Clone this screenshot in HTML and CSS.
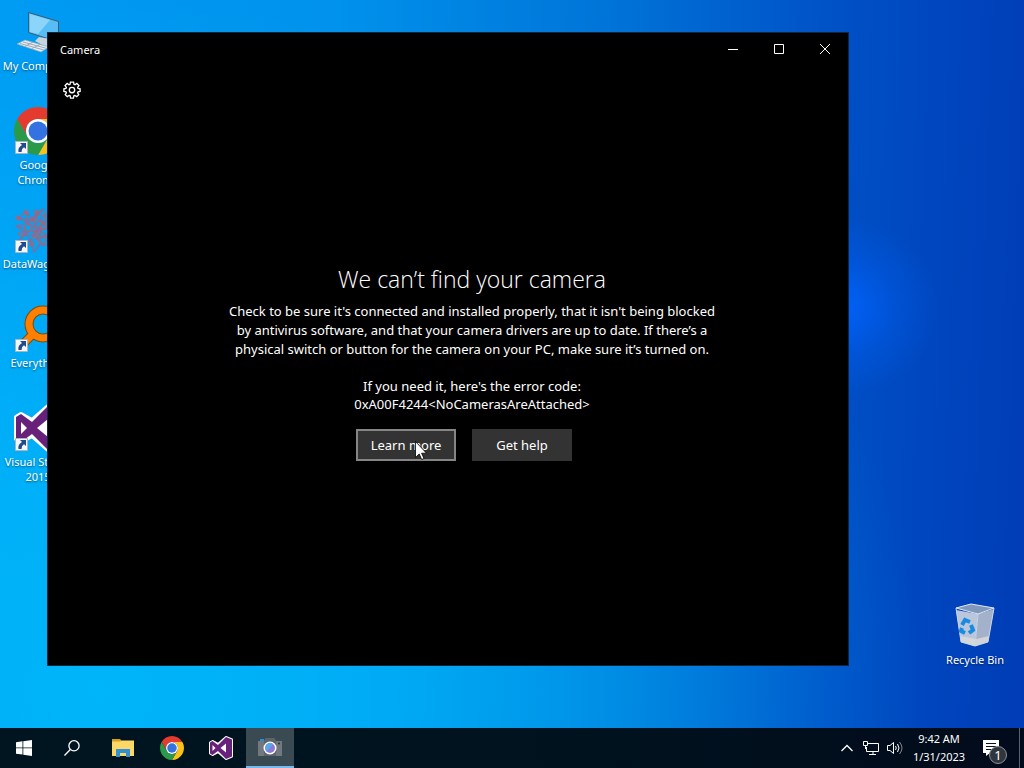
FILE: index.html
```
<!DOCTYPE html>
<html lang="en">
<head>
    <meta charset="utf-8">
    <title>Desktop</title>
    <link rel="stylesheet" href="styles.css">
</head>
<body>
    <!-- shared icons -->
    <svg class="sprites" aria-hidden="true">
        <symbol id="chrome" viewBox="0 0 48 48">
            <path fill="#e53b2e" d="M24 12H44.78A24 24 0 0 0 3.22 12L13.61 30A12 12 0 0 1 24 12Z"/>
            <path fill="#fbc116" d="M34.39 30L24 48A24 24 0 0 0 44.78 12H24A12 12 0 0 1 34.39 30Z"/>
            <path fill="#2b9a48" d="M13.61 30L3.22 12A24 24 0 0 0 24 48L34.39 30A12 12 0 0 1 13.61 30Z"/>
            <circle cx="24" cy="24" r="12" fill="#fff"/>
            <circle cx="24" cy="24" r="9.5" fill="#3372e0"/>
        </symbol>
        <symbol id="vs" viewBox="0 0 48 48">
            <path fill="#fff" stroke="#fff" stroke-width="4" stroke-linejoin="round" d="M34 2L46 7V41L34 46L18 32L7 38L2 35V13L7 10L18 16Z"/>
            <path fill="#68217a" fill-rule="evenodd" d="M34 2L46 7V41L34 46L18 30L7 38L2 35V13L7 10L18 18ZM34 15L23 24L34 33ZM7 18V30L13 24Z"/>
        </symbol>
        <symbol id="shortcut" viewBox="0 0 13 13">
            <path fill="#f4f6fa" stroke="#a9b4c4" d="M.5.5h12v12H.5z"/>
            <path fill="#234a8c" d="M5 2h6v6L9 6.300Q6.500 7.500 6.500 11H3.500Q2.500 6.500 7 4Z"/>
        </symbol>
    </svg>

    <main class="desktop">
        <div class="shortcuts">
            <a class="shortcut" href="#">
                <span class="picture">
                    <svg viewBox="0 0 48 48">
                        <path fill="#58bdf5" stroke="#405a70" d="M14.500 4.500L44.500 13.500V34L14.500 24.500Z"/>
                        <path fill="#8bd5fb" d="M16 6L36 12L24 26L16 24Z"/>
                        <path fill="#c8d3dc" d="M25 29L36 31L40 36L32 39L21 33Z"/>
                        <path fill="#e8edf2" stroke="#8fa6b8" stroke-width=".7" d="M3 36L11 32L35 39L27 44Z"/>
                        <path stroke="#9aaab8" fill="none" d="M6 35.500L30 42M9 34L33 40.500M11 38.500L19 34M18 40.500L26 36.500"/>
                    </svg>
                </span>
                <span>My Computer</span>
            </a>
            <a class="shortcut" href="#">
                <span class="picture">
                    <svg><use href="#chrome"/></svg>
                    <svg class="arrow"><use href="#shortcut"/></svg>
                </span>
                <span>Google<br>Chrome</span>
            </a>
            <a class="shortcut" href="#">
                <span class="picture">
                    <svg viewBox="0 0 48 48" fill="none" stroke="#8a6a96" stroke-width="1.200">
                        <path d="M4 12L12 6L19 14L29 3L34 13L43 12L37 22L46 26L34 30L38 42L27 37L20 46L16 35L4 36L12 27L2 20L14 17Z"/>
                        <path d="M12 6L14 17L22 8L29 3M4 12L19 14L24 24L12 27L4 36M2 20L10 22L16 35L24 24L34 13M20 46L27 37L24 24L37 22M14 17L34 30L16 35M10 12L19 21L30 9M8 30L21 29L30 40M27 14L38 27L25 31"/>
                        <g stroke="#b5606c">
                            <circle cx="12" cy="6" r="2"/><circle cx="4" cy="12" r="2"/><circle cx="19" cy="14" r="2"/>
                            <circle cx="14" cy="22" r="3"/><circle cx="21" cy="29" r="2"/><circle cx="29" cy="20" r="3"/>
                            <circle cx="7" cy="28" r="2"/><circle cx="22" cy="6" r="2"/><circle cx="18" cy="38" r="2"/>
                            <circle cx="27" cy="12" r="4"/><circle cx="24" cy="24" r="4"/><circle cx="28" cy="34" r="4"/>
                        </g>
                    </svg>
                    <svg class="arrow"><use href="#shortcut"/></svg>
                </span>
                <span>DataWagon-1</span>
            </a>
            <a class="shortcut" href="#">
                <span class="picture">
                    <svg viewBox="0 0 48 48" fill="none">
                        <circle cx="29" cy="19" r="14" stroke="#7a4a12" stroke-width="9"/>
                        <path stroke="#7a4a12" stroke-width="9" d="M19 29L5 43"/>
                        <circle cx="29" cy="19" r="14" stroke="#ff8000" stroke-width="7"/>
                        <path stroke="#ff8000" stroke-width="7" d="M19 29L6 42"/>
                    </svg>
                    <svg class="arrow"><use href="#shortcut"/></svg>
                </span>
                <span>Everything</span>
            </a>
            <a class="shortcut" href="#">
                <span class="picture">
                    <svg><use href="#vs"/></svg>
                    <svg class="arrow"><use href="#shortcut"/></svg>
                </span>
                <span>Visual Studio<br>2015</span>
            </a>
        </div>

        <a class="shortcut bin" href="#">
            <span class="picture">
                <svg viewBox="0 0 48 48">
                    <path fill="#b9c6dc" d="M5 8L27 12L24 44L10 40Z"/>
                    <path fill="#a3b1ca" d="M27 12L43 7L37 40L24 44Z"/>
                    <path fill="#8198bd" stroke="#e1e8f2" d="M5 6L20 2L43 6L27 12Z"/>
                    <path fill="#dcdcd9" d="M9 34L25 37L24 44L10 40ZM25 37L38 34L37 40L24 44Z" opacity=".8"/>
                    <path fill="none" stroke="#ccd6e6" d="M5 6L10 40L24 44L37 40L43 6M27 12L24 44"/>
                    <path fill="none" stroke="#188be0" stroke-width="4" d="M11 23L14 18L19 20M20 23L22 28L18 31M14 31L10 29L11 26"/>
                </svg>
            </span>
            <span>Recycle Bin</span>
        </a>

        <section class="window" aria-labelledby="title">
            <header class="titlebar">
                <span id="title">Camera</span>
                <div class="window-buttons">
                    <button type="button" aria-label="Minimize"><svg viewBox="0 0 10 10"><path d="M0 5.500H10"/></svg></button>
                    <button type="button" aria-label="Maximize"><svg viewBox="0 0 10 10"><path d="M.5.5h9v9h-9z"/></svg></button>
                    <button type="button" aria-label="Close"><svg viewBox="0 0 10 10"><path d="M0 0L10 10M10 0L0 10"/></svg></button>
                </div>
            </header>
            <div class="camera">
                <button type="button" class="settings" aria-label="Settings">
                    <svg viewBox="0 0 20 20">
                        <path d="M8.300 1.200H11.700L12.200 3.600L13.300 4.100L15.400 2.700L17.700 5L16.300 7.100L16.700 8.200L19 8.600V11.600L16.700 12L16.200 13.100L17.500 15.200L15.300 17.400L13.200 16.100L12.100 16.500L11.600 19H8.400L7.900 16.500L6.800 16.100L4.700 17.400L2.500 15.200L3.800 13.100L3.300 12L1 11.600V8.600L3.300 8.200L3.700 7.100L2.300 5L4.600 2.700L6.700 4.100L7.800 3.600Z"/>
                        <circle cx="10" cy="10" r="3"/>
                    </svg>
                </button>
                <div class="message">
                    <h1>We can’t find your camera</h1>
                    <p>Check to be sure it's connected and installed properly, that it isn't being blocked<br>
                    by antivirus software, and that your camera drivers are up to date. If there’s a<br>
                    physical switch or button for the camera on your PC, make sure it’s turned on.</p>
                    <p class="error">If you need it, here's the error code:<br>
                    0xA00F4244&lt;NoCamerasAreAttached&gt;</p>
                    <div class="actions">
                        <button type="button" class="active">Learn more</button>
                        <button type="button">Get help</button>
                    </div>
                </div>
            </div>
        </section>

        <svg class="cursor" viewBox="0 0 12 19">
            <path fill="#fff" stroke="#000" stroke-width=".8" d="M.5.500V16.500L4.200 13L6.700 18.500L9 17.500L6.600 12.200H11.500Z"/>
        </svg>
    </main>

    <footer class="taskbar">
        <button type="button" class="task" aria-label="Start">
            <svg class="small" viewBox="0 0 16 16"><path fill="#fff" d="M0 2.200L6.500 1.300V7.500H0ZM7.300 1.200L16 0V7.500H7.300ZM0 8.300H6.500V14.600L0 13.700ZM7.300 8.300H16V16L7.300 14.800Z"/></svg>
        </button>
        <button type="button" class="task" aria-label="Search">
            <svg class="small" viewBox="0 0 16 16" fill="none" stroke="#fff" stroke-width="1.300"><circle cx="10" cy="5.800" r="5.100"/><path d="M6.300 9.500L.5 15.500"/></svg>
        </button>
        <nav class="apps" aria-label="Apps">
            <button type="button" class="task" aria-label="File Explorer">
                <svg viewBox="0 0 24 24">
                    <path fill="#d99e20" d="M1 3H9L11 5H22V9H1Z"/>
                    <path fill="#fcd967" d="M1 5.500H9L11 4.500H23V20H1Z"/>
                    <path fill="#3290d4" d="M5 13H19V21H15V17H9V21H5Z"/>
                </svg>
            </button>
            <button type="button" class="task" aria-label="Google Chrome"><svg><use href="#chrome"/></svg></button>
            <button type="button" class="task" aria-label="Visual Studio"><svg><use href="#vs"/></svg></button>
            <button type="button" class="task running" aria-label="Camera">
                <svg viewBox="0 0 24 24">
                    <path fill="#2b8bd8" d="M2 4H6V6H2Z"/>
                    <path fill="#72787d" d="M0 6H6L8 3H16L18 6H24V21H0Z"/>
                    <path fill="#5d6469" d="M6 6L8 3H16L18 6V21H6Z"/>
                    <circle cx="12" cy="13" r="6.500" fill="#fff"/>
                    <circle cx="12" cy="13" r="5" fill="#8d79d6"/>
                    <path fill="#58a9e8" d="M8.500 9.500A5 5 0 0 1 15 9L9 16.500A5 5 0 0 1 8.500 9.500Z"/>
                    <circle cx="21" cy="8.500" r="1" fill="#333"/>
                </svg>
            </button>
        </nav>
        <div class="tray">
            <button type="button" aria-label="Show hidden icons"><svg viewBox="0 0 16 16"><path stroke-width="1.300" d="M2.500 11L8 5.500L13.500 11"/></svg></button>
            <button type="button" aria-label="Network"><svg viewBox="0 0 16 16"><path d="M5 3.500H15.500V11.500H3.500V7M10 11.500V14.500M6 14.500H13M.5 1.500H4.500V5.500H.5ZM2.500 6V9"/></svg></button>
            <button type="button" aria-label="Volume"><svg viewBox="0 0 16 16"><path d="M.5 5.500H3L6.500 2.500V13.500L3 10.500H.5ZM8.500 6Q10 8 8.500 10M10.500 4Q13.500 8 10.500 12"/><path opacity=".5" d="M12.500 2Q17.500 8 12.500 14"/></svg></button>
            <div class="clock">
                <time datetime="09:42">9:42 AM</time>
                <time datetime="2023-01-31">1/31/2023</time>
            </div>
            <button type="button" class="notices" aria-label="Notifications">
                <svg viewBox="0 0 16 16"><path fill="#fff" stroke="none" d="M0 0H16V13H7L3 16V13H0Z"/><path stroke="#06101f" d="M3 3.500H13M3 6.500H13M3 9.500H9"/></svg>
                <span class="badge">1</span>
            </button>
            <button type="button" class="show-desktop" aria-label="Show desktop"></button>
        </div>
    </footer>
</body>
</html>
```

FILE: styles.css
```
* {
    box-sizing: border-box;
}

body {
    margin: 0;
    height: 100vh;
    display: flex;
    flex-direction: column;
    overflow: hidden;
    font-family: "Noto Sans", "Open Sans", sans-serif;
    font-size: 11px;
    color: #fff;
    background:
        radial-gradient(ellipse 100px 90px at 82% 40%, rgba(0, 100, 255, 0.9), rgba(0, 100, 255, 0.3) 55%, rgba(0, 100, 255, 0)),
        radial-gradient(ellipse 80% 90% at 10% 90%, rgba(0, 184, 250, 0.9), rgba(0, 184, 250, 0.7) 35%, rgba(0, 184, 250, 0)),
        linear-gradient(92deg, #009bf3 0%, #0092ec 32%, #0074d8 58%, #0050c6 80%, #003cb6 100%);
}

button {
    padding: 0;
    border: 0;
    font: inherit;
    color: inherit;
    background: none;
}

svg {
    display: block;
}

.sprites {
    position: absolute;
    width: 0;
    height: 0;
}

/* desktop */
.desktop {
    position: relative;
    flex: 1;
}

.shortcuts {
    display: grid;
    grid-auto-rows: 99px;
    width: 76px;
    padding-top: 8px;
}

.shortcut {
    display: flex;
    flex-direction: column;
    align-items: center;
    gap: 2px;
    width: 76px;
    line-height: 15px;
    text-align: center;
    white-space: nowrap;
    color: #fff;
    text-decoration: none;
    text-shadow: 0 1px 2px rgba(0, 0, 0, 0.5);
}

.picture {
    position: relative;
}

.picture svg {
    width: 48px;
    height: 48px;
}

.picture .arrow {
    position: absolute;
    left: 1px;
    bottom: 1px;
    width: 13px;
    height: 13px;
}

.bin {
    position: absolute;
    right: 11px;
    bottom: 61px;
}

/* camera window */
.window {
    position: absolute;
    top: 32px;
    right: 175px;
    bottom: 62px;
    left: 47px;
    display: flex;
    flex-direction: column;
    background: #000;
    border: 1px solid #16233c;
}

.titlebar {
    display: flex;
    justify-content: space-between;
    align-items: center;
    height: 32px;
    padding-left: 12px;
}

.window-buttons {
    display: flex;
}

.window-buttons button {
    display: grid;
    place-items: center;
    width: 46px;
    height: 32px;
}

.window-buttons svg {
    width: 10px;
    height: 10px;
    fill: none;
    stroke: #fff;
}

.camera {
    flex: 1;
    display: grid;
    grid-template-columns: 48px 1fr;
}

.settings {
    display: grid;
    place-items: center;
    align-self: start;
    height: 50px;
}

.settings svg {
    width: 18px;
    height: 18px;
    fill: none;
    stroke: #fff;
    stroke-width: 1.5;
}

.message {
    align-self: center;
    padding-bottom: 6px;
    text-align: center;
    font-size: 13px;
    line-height: 19px;
    white-space: nowrap;
}

h1 {
    margin: 0 0 7px;
    font-family: "Open Sans", "Noto Sans", sans-serif;
    font-size: 23px;
    font-weight: 300;
    line-height: 32px;
}

p {
    margin: 0 0 18px;
}

.error {
    margin-bottom: 16px;
    line-height: 18px;
}

.actions {
    display: flex;
    justify-content: center;
    gap: 16px;
    padding-right: 16px;
}

.actions button {
    width: 100px;
    height: 32px;
    background: #333;
}

.actions .active {
    border: 2px solid #858585;
}

.cursor {
    position: absolute;
    left: 415px;
    top: 441px;
    width: 12px;
    height: 19px;
}

/* taskbar */
.taskbar {
    display: flex;
    height: 40px;
    background: linear-gradient(90deg, #00151f, #00131f 50%, #020b1b);
}

.task {
    display: grid;
    place-items: center;
    width: 48px;
    height: 40px;
}

.task svg {
    width: 24px;
    height: 24px;
}

.task .small {
    width: 16px;
    height: 16px;
}

.apps {
    display: flex;
    gap: 1px;
    margin-left: 3px;
}

.running {
    background: #3a4a53;
    border-bottom: 2px solid #76b9ed;
}

.tray {
    display: flex;
    align-items: center;
    margin-left: auto;
}

.tray button {
    display: grid;
    place-items: center;
    width: 24px;
    height: 40px;
}

.tray svg {
    width: 16px;
    height: 16px;
    fill: none;
    stroke: #fff;
}

.clock {
    display: flex;
    flex-direction: column;
    width: 64px;
    line-height: 18px;
    text-align: center;
}

.tray .notices {
    position: relative;
    width: 48px;
    padding-right: 8px;
}

.badge {
    position: absolute;
    right: 12px;
    bottom: 4px;
    width: 18px;
    border: 1px solid #8b9299;
    border-radius: 9px;
    font-size: 13px;
    line-height: 16px;
    background: #30363e;
}

.tray .show-desktop {
    width: 5px;
    border-left: 1px solid #59616b;
}
```
